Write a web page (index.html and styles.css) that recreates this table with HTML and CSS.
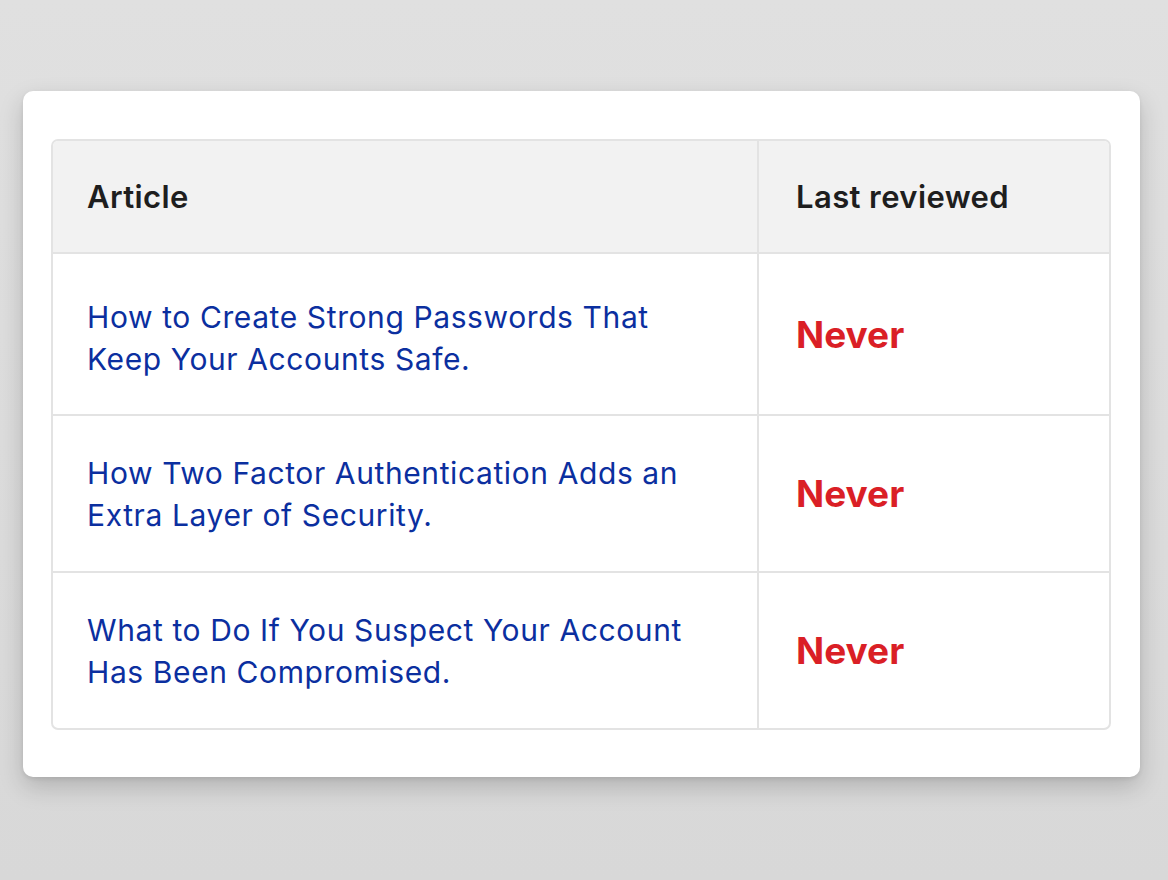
FILE: index.html
```html
<!DOCTYPE html>
<html>
<head>
<meta charset="utf-8">
<link rel="stylesheet" href="styles.css">
</head>
<body>
<div class="page">
  <div class="card">
    <div class="table">
      <div class="row head">
        <div class="cell c1">Article</div>
        <div class="cell c2">Last reviewed</div>
      </div>
      <div class="row first">
        <div class="cell c1"><a class="link">How to Create Strong Passwords That Keep Your Accounts Safe.</a></div>
        <div class="cell c2"><span class="never">Never</span></div>
      </div>
      <div class="row">
        <div class="cell c1"><a class="link">How Two Factor Authentication Adds an Extra Layer of Security.</a></div>
        <div class="cell c2"><span class="never">Never</span></div>
      </div>
      <div class="row">
        <div class="cell c1"><a class="link">What to Do If You Suspect Your Account Has Been Compromised.</a></div>
        <div class="cell c2"><span class="never">Never</span></div>
      </div>
    </div>
  </div>
</div>
</body>
</html>
```
FILE: styles.css
```css
html, body {
  margin: 0;
  padding: 0;
}
body {
  width: 1168px;
  height: 880px;
  background: linear-gradient(#e0e0e0, #d8d8d8);
  font-family: Inter, "Liberation Sans", Arial, sans-serif;
  overflow: hidden;
}
.page {
  padding: 91px 28px 0 23px;
}
.card {
  width: 1117px;
  height: 686px;
  box-sizing: border-box;
  background: #ffffff;
  border-radius: 10px;
  box-shadow: 0 10px 24px rgba(0, 0, 0, 0.18), 0 2px 4px rgba(0, 0, 0, 0.08);
  padding: 48px 29px 0 28px;
}
.table {
  border: 2px solid #e3e3e3;
  border-radius: 7px;
  overflow: hidden;
}
.row {
  display: grid;
  grid-template-columns: 704px 1fr;
  border-top: 2px solid #e3e3e3;
  height: 155px;
}
.row.head {
  border-top: none;
  background: #f2f2f2;
  height: 111px;
}
.row.first {
  height: 160px;
}
.row.first .c1 {
  padding-top: 8px;
}
.cell {
  display: flex;
  align-items: center;
  padding: 0 50px 0 34px;
}
.c2 {
  border-left: 2px solid #e3e3e3;
  padding-left: 37px;
}
.head .cell {
  font-weight: 600;
  font-size: 31px;
  letter-spacing: 0.4px;
  color: #1e1e1e;
}
.link {
  color: #0b2f9f;
  font-size: 30px;
  letter-spacing: 0.6px;
  line-height: 42px;
}
.never {
  color: #da1f26;
  font-weight: 700;
  font-size: 37px;
}
```
